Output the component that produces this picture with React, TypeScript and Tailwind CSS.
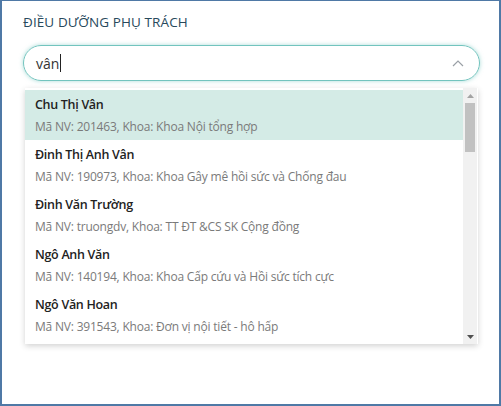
import React from "react";

const items = [
  { name: "Chu Thị Vân", sub: "Mã NV: 201463, Khoa: Khoa Nội tổng hợp" },
  { name: "Đinh Thị Anh Vân", sub: "Mã NV: 190973, Khoa: Khoa Gây mê hồi sức và Chống đau" },
  { name: "Đinh Văn Trường", sub: "Mã NV: truongdv, Khoa: TT ĐT &CS SK Cộng đồng" },
  { name: "Ngô Anh Văn", sub: "Mã NV: 140194, Khoa: Khoa Cấp cứu và Hồi sức tích cực" },
  { name: "Ngô Văn Hoan", sub: "Mã NV: 391543, Khoa: Đơn vị nội tiết - hô hấp" },
];

export default function App() {
  return (
    <div
      className="w-[501px] h-[406px] bg-white border-l-2 border-r-2 border-t border-b-2 border-[#4f79a6] relative overflow-hidden"
      style={{ fontFamily: '"Segoe UI", "Open Sans", "Noto Sans", sans-serif' }}
    >
      <div className="pl-[21px] pr-[19px] pt-[11px]">
        <div className="text-[13.5px] text-[#28495c] tracking-[0.1px] leading-[20px]">ĐIỀU DƯỠNG PHỤ TRÁCH</div>
        <div className="mt-[13px] h-[36px] rounded-full border-[1.5px] border-[#72c4be] shadow-[0_0_4px_rgba(114,196,190,0.6)] flex items-center pl-[12px] pr-[14px]">
          <span className="text-[14px] text-[#333]">vân</span>
          <span className="w-px h-[18px] bg-[#222] ml-[1px]" />
          <div className="flex-1" />
          <svg width="14" height="10" viewBox="0 0 14 10" fill="none">
            <path d="M2 8 L7 3 L12 8" stroke="#9aa0a6" strokeWidth="1.2" />
          </svg>
        </div>
        <div className="mt-[7px] ml-[2px] mr-[2px] h-[256px] bg-white shadow-[0_2px_6px_rgba(0,0,0,0.18)] flex pt-[2px] pb-[3px]">
          <div className="flex-1 flex flex-col">
            {items.map((it, i) => (
              <div
                key={i}
                className={`h-[50px] pl-[10px] flex flex-col justify-center ${i === 0 ? "bg-[#d4ebe6]" : ""}`}
              >
                <div className="text-[12.5px] font-semibold text-[#222] leading-[20px] tracking-[-0.3px]">{it.name}</div>
                <div className="text-[12px] text-[#7a7a7a] leading-[18px] mt-[3px] tracking-[-0.2px]">{it.sub}</div>
              </div>
            ))}
          </div>
          <div className="w-[14px] bg-[#f1f1f1] flex flex-col items-center -mt-[2px] -mb-[3px] mr-[1px]">
            <div className="h-[15px] flex items-center justify-center">
              <svg width="7" height="4" viewBox="0 0 7 4"><path d="M0 4 L3.5 0 L7 4 Z" fill="#a3a3a3" /></svg>
            </div>
            <div className="w-[10px] h-[49px] bg-[#c1c1c1]" />
            <div className="flex-1" />
            <div className="h-[15px] flex items-center justify-center">
              <svg width="7" height="4" viewBox="0 0 7 4"><path d="M0 0 L7 0 L3.5 4 Z" fill="#505050" /></svg>
            </div>
          </div>
        </div>
      </div>
    </div>
  );
}
